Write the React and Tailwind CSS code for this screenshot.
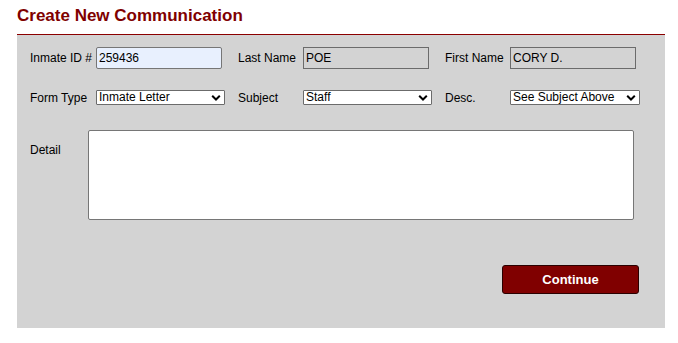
import React from 'react';

const Chevron = () => (
  <svg className="pointer-events-none absolute right-[4px] top-1/2 -translate-y-1/2" width="10" height="7" viewBox="0 0 10 7">
    <path d="M1.2 1.3L5 5l3.8-3.7" fill="none" stroke="#000" strokeWidth="2" />
  </svg>
);

const Select = ({ width, value }) => (
  <div className={`relative ${width}`}>
    <select
      defaultValue={value}
      className="block h-[15px] w-full appearance-none rounded-[1px] border border-[#6b6b6b] bg-white pl-[2px] text-[12px] leading-[13px] text-black outline-none"
    >
      <option>{value}</option>
    </select>
    <Chevron />
  </div>
);

const App = () => {
  return (
    <div className="min-h-[343px] bg-white font-['Liberation_Sans',Arial,sans-serif] text-[12px] text-black">
      <div className="ml-[17px] w-[648px]">
        <h1 className="border-b border-[#8b0000] pb-[8px] pt-[6px] text-[17px] font-bold leading-[20px] text-[#800000]">
          Create New Communication
        </h1>

        <div className="bg-[#d3d3d3] pb-[34px] pl-[13px] pt-[12px]">
          <div className="grid grid-cols-[66px_142px_65px_142px_65px_130px] items-center gap-y-[21px]">
            <label className="leading-[14px]">Inmate ID #</label>
            <input
              defaultValue="259436"
              className="h-[22px] w-[126px] rounded-[2px] border border-[#767676] bg-[#e8f0fe] px-[2px] text-[12px] outline-none"
            />
            <label className="leading-[14px]">Last Name</label>
            <input
              readOnly
              defaultValue="POE"
              className="h-[22px] w-[126px] border border-[#6b6b6b] bg-[#d3d3d3] px-[2px] text-[12px] outline-none"
            />
            <label className="leading-[14px]">First Name</label>
            <input
              readOnly
              defaultValue="CORY D."
              className="h-[22px] w-[126px] border border-[#6b6b6b] bg-[#d3d3d3] px-[2px] text-[12px] outline-none"
            />

            <label className="leading-[14px]">Form Type</label>
            <Select width="w-[129px]" value="Inmate Letter" />
            <label className="leading-[14px]">Subject</label>
            <Select width="w-[129px]" value="Staff" />
            <label className="leading-[14px]">Desc.</label>
            <Select width="w-[130px]" value="See Subject Above" />
          </div>

          <div className="mt-[25px] flex">
            <label className="mt-[13px] w-[58px] leading-[14px]">Detail</label>
            <textarea className="h-[90px] w-[546px] resize-none rounded-[2px] border border-[#767676] bg-white p-[2px] text-[12px] outline-none" />
          </div>

          <div className="mt-[45px] flex justify-end pr-[26px]">
            <button className="h-[29px] w-[137px] rounded-[3px] border border-[#2a0000] bg-[#800000] text-[13px] font-bold text-white">
              Continue
            </button>
          </div>
        </div>
      </div>
    </div>
  );
};

export default App;
